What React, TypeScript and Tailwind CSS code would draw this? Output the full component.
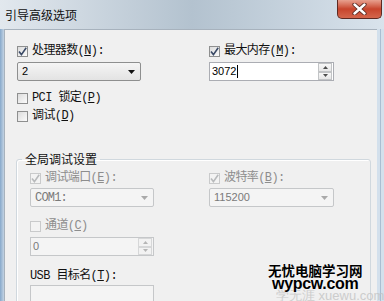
import React from "react";

const MONO = "font-['Liberation_Mono','Noto_Sans_CJK_SC',monospace]";

function Check({ checked, disabled }: { checked?: boolean; disabled?: boolean }) {
  return (
    <span
      className={`flex h-[11px] w-[11px] shrink-0 items-center justify-center border ${
        disabled
          ? "border-[#c9cacb] bg-[#f3f3f3]"
          : "border-[#8e8f8f] bg-linear-to-br from-[#dcdcdc] to-[#fbfbfb]"
      }`}
    >
      {checked && (
        <svg width="9" height="9" viewBox="0 0 9 9">
          <path
            d="M1 4.6 L3.4 7.6 L8.2 0.8"
            stroke={disabled ? "#b8babc" : "#3a4a66"}
            strokeWidth="1.6"
            fill="none"
          />
        </svg>
      )}
    </span>
  );
}

function Label({
  children,
  checked,
  disabled,
  box = true,
}: {
  children: React.ReactNode;
  checked?: boolean;
  disabled?: boolean;
  box?: boolean;
}) {
  return (
    <div
      className={`flex h-[14px] items-center gap-[4px] text-[12px] leading-[14px] tracking-[-0.6px] ${MONO} ${
        disabled ? "text-[#8d8d8d]" : "text-[#111]"
      }`}
    >
      {box && <Check checked={checked} disabled={disabled} />}
      <span className="whitespace-nowrap">{children}</span>
    </div>
  );
}

function Arrow({ color }: { color: string }) {
  return (
    <svg width="7" height="4" viewBox="0 0 7 4">
      <path d="M0 0 H7 L3.5 4 Z" fill={color} />
    </svg>
  );
}

function Combo({
  value,
  disabled,
  w,
  mono,
}: {
  value: string;
  disabled?: boolean;
  w: string;
  mono?: boolean;
}) {
  return (
    <div
      className={`flex h-[19px] ${w} items-center justify-between rounded-[2px] border pl-[4px] pr-[5px] ${
        disabled
          ? "border-[#c5c7c9] bg-[#f4f4f4] text-[#7a7a7a]"
          : "border-[#8e8f8f] bg-linear-to-b from-[#f5f5f5] to-[#e3e3e3] text-[#000]"
      } ${mono ? MONO + " text-[12px] tracking-[-0.8px]" : "font-['Liberation_Sans',sans-serif] text-[11px]"}`}
    >
      <span>{value}</span>
      <Arrow color={disabled ? "#a9a9a9" : "#111"} />
    </div>
  );
}

function Spin({ value, disabled, w, cursor }: { value: string; disabled?: boolean; w: string; cursor?: boolean }) {
  return (
    <div
      className={`flex h-[19px] ${w} items-center justify-between border pl-[2px] pr-[1px] font-['Liberation_Sans',sans-serif] text-[11px] ${
        disabled ? "border-[#c5c7c9] bg-[#f4f4f4] text-[#7a7a7a]" : "border-[#abadb3] bg-white text-black"
      }`}
    >
      <span className="flex items-center">
        {value}
        {cursor && <span className="ml-[1px] h-[13px] w-[1px] bg-black" />}
      </span>
      <div className="flex h-[17px] w-[14px] flex-col">
        {[0, 1].map((i) => (
          <div
            key={i}
            className={`flex flex-1 items-center justify-center border ${
              disabled ? "border-[#d6d7d8] bg-[#f2f2f2]" : "border-[#c2c4c6] bg-linear-to-b from-[#f8f8f8] to-[#e6e6e6]"
            }`}
          >
            <svg width="5" height="3" viewBox="0 0 5 3">
              <path d={i === 0 ? "M0 3 H5 L2.5 0 Z" : "M0 0 H5 L2.5 3 Z"} fill={disabled ? "#b5b5b5" : "#4d4d4d"} />
            </svg>
          </div>
        ))}
      </div>
    </div>
  );
}

export default function App() {
  return (
    <div className="relative flex h-[301px] w-[384px] flex-col overflow-hidden bg-[#c8d6e4] font-['Noto_Sans_CJK_SC',sans-serif]">
      {/* title bar */}
      <div className="flex h-[29px] shrink-0 items-center bg-linear-to-r from-[#e2e8ee] via-[#b3c2cf] to-[#d9e3ec] pl-[5px]">
        <span className="text-[12px] leading-[14px] text-[#111]">引导高级选项</span>
      </div>
      <div className="absolute right-[2px] top-0 flex h-[19px] w-[45px] items-center justify-center rounded-b-[5px] border border-t-0 border-[#5e2a22] bg-linear-to-b from-[#e7a08f] via-[#c7442c] to-[#d4664c]">
        <svg width="15" height="12" viewBox="0 0 15 12">
          <path d="M2.5 1.5 L12.5 10.5 M12.5 1.5 L2.5 10.5" stroke="#5a2a22" strokeWidth="4.2" strokeLinecap="round" />
          <path d="M2.5 1.5 L12.5 10.5 M12.5 1.5 L2.5 10.5" stroke="#ffffff" strokeWidth="2.4" strokeLinecap="round" />
        </svg>
      </div>

      <div className="flex min-h-0 flex-1">
        <div className="w-[4px] shrink-0 bg-linear-to-r from-[#87a9cb] to-[#c3d3e3]" />
        <div className="min-w-0 flex-1 border-l border-t border-[#a7b2bd] bg-[#f0f0f0] pl-[12px] pr-[6px] pt-[14px]">
          {/* row 1 */}
          <div className="flex">
            <div className="w-[192px]">
              <Label checked>
                处理器数(<u>N</u>):
              </Label>
              <div className="mt-[4px]">
                <Combo value="2" w="w-[124px]" />
              </div>
            </div>
            <div>
              <Label checked>
                最大内存(<u>M</u>):
              </Label>
              <div className="mt-[4px]">
                <Spin value="3072" w="w-[125px]" cursor />
              </div>
            </div>
          </div>

          <div className="mt-[10px]">
            <Label>
              PCI 锁定(<u>P</u>)
            </Label>
          </div>
          <div className="mt-[4px]">
            <Label>
              调试(<u>D</u>)
            </Label>
          </div>

          {/* group box */}
          <fieldset className="-ml-[1px] mt-[29px] h-[200px] rounded-[3px] border border-[#d0d8de] pl-[5px] shadow-[inset_1px_1px_0_#fff]">
            <legend className="px-[3px] text-[12px] leading-[14px] text-[#111]">全局调试设置</legend>
            <div className="pl-[8px]">
              <div className="mt-[5px] flex">
                <div className="w-[179px]">
                  <Label checked disabled>
                    调试端口(<u>E</u>):
                  </Label>
                  <div className="mt-[3px]">
                    <Combo value="COM1:" w="w-[124px]" disabled mono />
                  </div>
                </div>
                <div>
                  <Label checked disabled>
                    波特率(<u>B</u>):
                  </Label>
                  <div className="mt-[3px]">
                    <Combo value="115200" w="w-[125px]" disabled />
                  </div>
                </div>
              </div>
              <div className="mt-[12px]">
                <Label disabled>
                  通道(<u>C</u>)
                </Label>
                <div className="mt-[4px]">
                  <Spin value="0" w="w-[124px]" disabled />
                </div>
              </div>
              <div className="mt-[13px]">
                <Label box={false}>
                  USB 目标名(<u>T</u>):
                </Label>
                <div className="mt-[2px] h-[24px] w-[124px] border border-[#c5c7c9] bg-[#f4f4f4]" />
              </div>
            </div>
          </fieldset>
        </div>
        <div className="flex w-[7px] shrink-0 bg-[#d3e0ec]">
          <div className="ml-[3px] w-[1px] bg-[#a9bed2]" />
        </div>
      </div>

      {/* watermark */}
      <div className="absolute left-[276px] top-[289px] whitespace-nowrap font-['Liberation_Sans',sans-serif] text-[13px] leading-[14px] text-[#c4c4c4] opacity-80">
        学无涯 xuewu.com
      </div>
      <div className="absolute left-[268px] top-[262px] flex flex-col items-center">
        <span className="text-[13.5px] font-bold leading-[16px] text-black [text-shadow:0_0_2px_#fff]">无忧电脑学习网</span>
        <span className="-mt-[2px] font-['Liberation_Sans',sans-serif] text-[16px] font-bold leading-[16px] tracking-[-0.3px] text-black [text-shadow:0_0_2px_#fff]">
          wypcw.com
        </span>
      </div>
    </div>
  );
}
